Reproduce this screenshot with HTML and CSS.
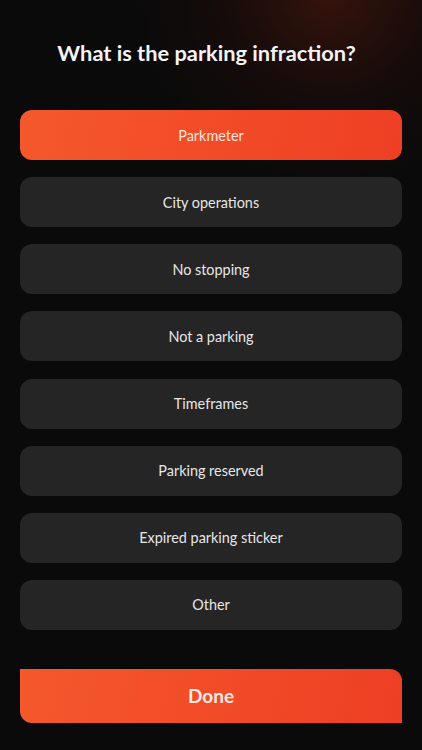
FILE: index.html
```html
<!DOCTYPE html>
<html lang="en">
<head>
<meta charset="UTF-8">
<meta name="viewport" content="width=device-width, initial-scale=1.0">
<title>Parking infraction</title>
<link rel="stylesheet" href="styles.css">
</head>
<body>
  <div class="screen">
    <h1 class="title">What is the parking infraction?</h1>
    <div class="options">
      <button class="option option-active">Parkmeter</button>
      <button class="option">City operations</button>
      <button class="option">No stopping</button>
      <button class="option">Not a parking</button>
      <button class="option">Timeframes</button>
      <button class="option">Parking reserved</button>
      <button class="option">Expired parking sticker</button>
      <button class="option">Other</button>
    </div>
    <button class="done-button">Done</button>
  </div>
</body>
</html>
```

FILE: styles.css
```css
html, body {
  margin: 0;
  padding: 0;
  height: 100%;
}
body {
  font-family: Lato, "Open Sans", sans-serif;
  background-color: #0a0a0a;
  background-image: radial-gradient(circle at 330px -10px, rgba(70, 22, 12, 0.75) 0px, rgba(40, 14, 10, 0.35) 110px, rgba(10, 10, 10, 0) 200px);
  background-repeat: no-repeat;
  color: #f2f2f2;
}
.screen {
  width: 422px;
  height: 750px;
  box-sizing: border-box;
  padding: 37px 20px 0 20px;
  display: flex;
  flex-direction: column;
}
.title {
  margin: 0;
  padding-right: 9px;
  font-size: 21.8px;
  font-weight: 700;
  text-align: center;
  line-height: 32px;
  color: #f4f4f4;
}
.options {
  margin-top: 41px;
  display: flex;
  flex-direction: column;
  gap: 17.15px;
}
.option {
  height: 50px;
  width: 100%;
  border: none;
  border-radius: 12px;
  background-color: #252525;
  color: #e6e6e6;
  font-family: Lato, "Open Sans", sans-serif;
  font-size: 14.4px;
  padding: 0;
}
.option-active {
  background-image: linear-gradient(100deg, #f5582c 0%, #ee3f24 100%);
  color: #fbe6df;
}
.done-button {
  margin-top: 39px;
  height: 54px;
  width: 382px;
  border: none;
  border-radius: 0 12px 0 12px;
  background-image: linear-gradient(100deg, #f5582c 0%, #ee3f24 100%);
  color: #fbeae4;
  font-family: Lato, "Open Sans", sans-serif;
  font-size: 19px;
  font-weight: 700;
  padding: 0;
}
```
